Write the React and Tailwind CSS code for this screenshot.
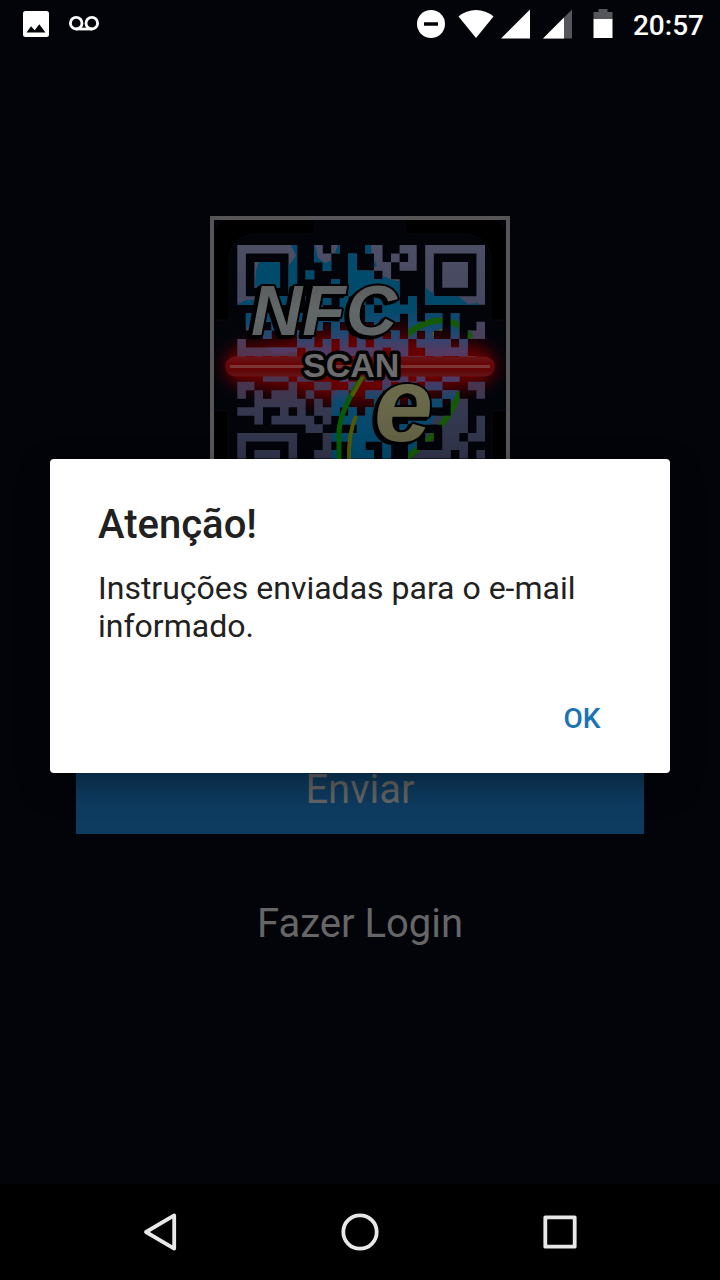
import React from "react";

const QR_ROWS = [
  "#######..#.#...##..##.#######",
  "#.....#..##..#..#.#.#.#.....#",
  "#.###.#...#..#..##.##.#.###.#",
  "#.###.#.#....###.#....#.###.#",
  "#.###.#....#.######...#.###.#",
  "#.....#...##.##..##...#.....#",
  "#######.#.#.#.#.#.#.#.#######",
  "........##..##.#.####........",
  ".#.#..##.##.#..####.#.##.#...",
  ".#..##..##.#.#..##..####.#..#",
  "...#...##..##.#.#.#.#.#..#.##",
  "#......##.#.#.#.####.####.#..",
  "#######.###.#####.##..#####..",
  "#.#.#.#.##.##.##.#####.#..##.",
  "##.#.##.#.#.##.##.#.##.##.#..",
  "...###.##...#..#.###.#..##...",
  "##....#..##..#...#.##.##...##",
  "#.#.###.#..##..##.#..#..##..#",
  "..######.#.##...###.#.##.##..",
  "###..#.#.###.#.#.##.##...##..",
  "..#.#####.#.######..#######.#",
  "........##....####.##...###.#",
  "#######...#########.#.#.##.##",
  "#.....#...#..##..#..#...###..",
  "#.###.#..###.###.#..#####.#.#",
];

const CELL = 8.54;
const QR_PATH = QR_ROWS.map((row, r) =>
  [...row]
    .map((c, i) =>
      c === "#"
        ? `M${(23.3 + i * CELL).toFixed(2)} ${(25 + r * CELL).toFixed(2)}h8.6v8.6h-8.6z`
        : ""
    )
    .join("")
).join("");

function AppLogo() {
  return (
    <svg viewBox="0 0 292 292" className="block w-full" role="img" aria-label="NFC Scan e">
      <defs>
        <clipPath id="modules">
          <path d={QR_PATH} />
        </clipPath>
        <linearGradient id="moduleFill" x1="0" y1="0" x2="0" y2="292" gradientUnits="userSpaceOnUse">
          <stop offset="0.1" stopColor="#4b4e64" />
          <stop offset="0.36" stopColor="#44445f" />
          <stop offset="0.46" stopColor="#55354f" />
          <stop offset="0.56" stopColor="#47354f" />
          <stop offset="0.66" stopColor="#343850" />
          <stop offset="0.85" stopColor="#2f3347" />
        </linearGradient>
        <linearGradient id="blueFill" x1="0" y1="0" x2="0" y2="292" gradientUnits="userSpaceOnUse">
          <stop offset="0.3" stopColor="#004a6c" />
          <stop offset="0.38" stopColor="#1a4a72" />
          <stop offset="0.45" stopColor="#553a62" />
          <stop offset="0.55" stopColor="#4d3a62" />
          <stop offset="0.63" stopColor="#0a4a6e" />
          <stop offset="0.8" stopColor="#00486a" />
        </linearGradient>
        <radialGradient id="glow">
          <stop offset="0" stopColor="#7a0000" />
          <stop offset="0.5" stopColor="#5c0000" />
          <stop offset="1" stopColor="#300000" stopOpacity="0" />
        </radialGradient>
        <linearGradient id="beam" x1="0" y1="0" x2="0" y2="1">
          <stop offset="0" stopColor="#65161a" />
          <stop offset="0.35" stopColor="#6a0506" />
          <stop offset="0.7" stopColor="#620405" />
          <stop offset="1" stopColor="#5e171a" />
        </linearGradient>
        <linearGradient id="steel" x1="0" y1="0" x2="0" y2="1">
          <stop offset="0" stopColor="#565959" />
          <stop offset="0.5" stopColor="#626767" />
          <stop offset="1" stopColor="#5a6062" />
        </linearGradient>
        <linearGradient id="sand" x1="0" y1="0" x2="0" y2="1">
          <stop offset="0.4" stopColor="#6b6a4c" />
          <stop offset="1" stopColor="#5e5d40" />
        </linearGradient>
        <filter id="soft" x="-20%" y="-150%" width="140%" height="400%">
          <feGaussianBlur stdDeviation="8" />
        </filter>
        <filter id="extrude" x="-20%" y="-20%" width="140%" height="140%">
          <feDropShadow dx="-3" dy="2" stdDeviation="0.6" floodColor="#000000" floodOpacity="1" />
        </filter>
      </defs>

      <path
        fill="#000000"
        stroke="#0d0e12"
        strokeWidth="0.6"
        d="M12 0H101V14H42Q15 16 15 42V100H0V12Q2 3 12 0ZM191 0H280Q290 3 292 12V100H277V42Q277 16 250 14H191ZM0 191H14V292H0ZM278 191H292V292H278Z"
      />
      <ellipse cx="146" cy="146" rx="146" ry="54" fill="url(#glow)" />
      <rect x="12" y="128" width="268" height="36" rx="18" fill="#6c0000" filter="url(#soft)" />

      <g clipPath="url(#modules)">
        <rect width="292" height="292" fill="url(#moduleFill)" />
        <path
          fill="url(#blueFill)"
          d="M77 25H101L104 38L111 43L118 40L124 25H157L158 36L163 46L156 50L178 60L205 65L211 67L217 72L245 77L254 84L264 83L268 90L256 112L250 150L240 180L224 192L212 212L196 240H118V178L122 168L116 155L100 130L60 134L40 112L24 100V84L32 80H39L46 76L70 76L66 68L41 66L42 50L45 42H66V50L71 50L76 44L82 36Z"
        />
        <path fill="none" stroke="#145a04" strokeWidth="6" d="M190 117Q212 98 234 101Q248 104 257 118M246 172Q230 214 186 242" />
        <path fill="none" stroke="#6b5c05" strokeWidth="5" d="M219 115L229 111M257 126V137" />
      </g>
      <path fill="none" stroke="#075a08" strokeWidth="5" d="M149 156Q126 190 125 212V242" />
      <path fill="none" stroke="#4e5a06" strokeWidth="4" d="M149 156L138 176M142 196Q134 214 135 242" />

      <rect x="12" y="137" width="268" height="19" rx="9" fill="url(#beam)" stroke="#730e10" strokeWidth="1" />
      <rect x="16" y="145" width="260" height="3" fill="#7b3434" />

      <g
        fontFamily="'Liberation Sans', Arial, sans-serif"
        fontWeight="700"
        strokeLinejoin="round"
        paintOrder="stroke"
        stroke="#030303"
      >
        <text x="37" y="115" fontSize="71" fontStyle="italic" fill="url(#steel)" strokeWidth="4" filter="url(#extrude)">
          NFC
        </text>
        <text x="89" y="157" fontSize="34" fill="#6c6c6c" strokeWidth="7">
          SCAN
        </text>
        <text x="160" y="221" fontSize="106" fontStyle="italic" fill="url(#sand)" strokeWidth="4" filter="url(#extrude)">
          e
        </text>
      </g>
    </svg>
  );
}

function StatusBar() {
  return (
    <header className="flex h-12 items-center justify-between pr-4 pl-[22px] text-white">
      <div className="flex items-center gap-[19px]">
        <svg width="28" height="28" viewBox="0 0 28 28" aria-label="Captura de tela">
          <path
            fill="#ffffff"
            fillRule="evenodd"
            d="M3.500 1H24.500A2.500 2.500 0 0 1 27 3.500V24.500A2.500 2.500 0 0 1 24.500 27H3.500A2.500 2.500 0 0 1 1 24.500V3.500A2.500 2.500 0 0 1 3.500 1ZM4.500 22.500H23.500L17.300 14.200L12.700 20.200L9 16.200Z"
          />
        </svg>
        <svg width="30" height="28" viewBox="0 0 30 28" aria-label="Correio de voz" fill="none" stroke="#ffffff" strokeWidth="2.800">
          <circle cx="7.200" cy="13.200" r="5.800" />
          <circle cx="22.800" cy="13.200" r="5.800" />
          <path d="M7 19H23" />
        </svg>
      </div>
      <div className="flex items-center">
        <svg width="28" height="30" viewBox="0 0 28 30" aria-label="Não perturbe">
          <circle cx="14" cy="15" r="14" fill="#ffffff" />
          <path d="M7 15H21" stroke="#03040a" strokeWidth="3.500" />
        </svg>
        <svg width="36" height="30" viewBox="0 0 36 30" className="ml-[13px]" aria-label="Wi-Fi">
          <path d="M0.500 7.500Q8 1 18 1T35.500 7.500L18 29Z" fill="#ffffff" />
        </svg>
        <svg width="30" height="30" viewBox="0 0 30 30" className="ml-[7px]" aria-label="Sinal 1">
          <path d="M0 29.500L29 0.500V29.500Z" fill="#ffffff" />
        </svg>
        <svg width="30" height="30" viewBox="0 0 30 30" className="ml-3" aria-label="Sinal 2">
          <path d="M0 29.500L29 0.500V29.500Z" fill="#55565b" />
          <path d="M0 29.500L21 8.500V29.500Z" fill="#ffffff" />
        </svg>
        <svg width="20" height="30" viewBox="0 0 20 30" className="ml-5" aria-label="Bateria">
          <path d="M0.500 3H5.500V0H14.500V3H19.500V10H0.500Z" fill="#55565b" />
          <path d="M0.500 10H19.500V29H0.500Z" fill="#ffffff" />
        </svg>
        <time className="ml-5 pt-1 text-[28px] leading-8 font-medium">20:57</time>
      </div>
    </header>
  );
}

function AlertDialog() {
  return (
    <div className="absolute inset-0 flex items-center justify-center px-[50px]">
      <div
        role="alertdialog"
        aria-labelledby="alert-title"
        aria-describedby="alert-message"
        className="flex w-full max-w-[620px] flex-col rounded-[4px] bg-white px-6 pt-[42px] pb-[18px] text-[#212121] shadow-[0_12px_32px_rgba(0,0,0,0.4)]"
      >
        <h1 id="alert-title" className="px-6 text-[40px] leading-[48px] font-medium">
          Atenção!
        </h1>
        <p id="alert-message" className="mt-5 px-6 text-[32px] leading-[38px]">
          Instruções enviadas para o e-mail informado.
        </p>
        <button type="button" className="mt-[38px] h-[72px] w-32 self-end text-[28px] leading-8 font-medium text-[#1a73b2]">
          OK
        </button>
      </div>
    </div>
  );
}

function NavigationBar() {
  return (
    <nav className="grid h-24 grid-cols-3 bg-black px-[60px]">
      <button type="button" aria-label="Voltar" className="flex items-center justify-center">
        <svg width="40" height="40" viewBox="0 0 40 40" fill="none" stroke="#e8e8e8" strokeWidth="3.800" strokeLinejoin="round">
          <path d="M34.200 3.400V36.600L6 20Z" />
        </svg>
      </button>
      <button type="button" aria-label="Início" className="flex items-center justify-center">
        <svg width="40" height="40" viewBox="0 0 40 40" fill="none" stroke="#e8e8e8" strokeWidth="3.800">
          <circle cx="20" cy="20" r="16.700" />
        </svg>
      </button>
      <button type="button" aria-label="Recentes" className="flex items-center justify-center">
        <svg width="40" height="40" viewBox="0 0 40 40" fill="none" stroke="#e8e8e8" strokeWidth="3.800" strokeLinejoin="round">
          <path d="M5.300 5.300H34.700V34.700H5.300Z" />
        </svg>
      </button>
    </nav>
  );
}

export default function App() {
  return (
    <div className="flex min-h-screen flex-col bg-[#03040a] font-['Roboto',sans-serif]">
      <StatusBar />
      <main className="relative flex flex-1 flex-col items-center px-[76px] pt-[168px]">
        <div className="w-[300px] border-4 border-[#575555]">
          <AppLogo />
        </div>
        <button type="button" className="mt-[230px] h-[88px] w-full bg-[#0e3c61] text-[40px] leading-[48px] text-[#666666]">
          Enviar
        </button>
        <a href="#login" className="mt-[66px] text-[40px] leading-[48px] text-[#666666]">
          Fazer Login
        </a>
        <AlertDialog />
      </main>
      <NavigationBar />
    </div>
  );
}
